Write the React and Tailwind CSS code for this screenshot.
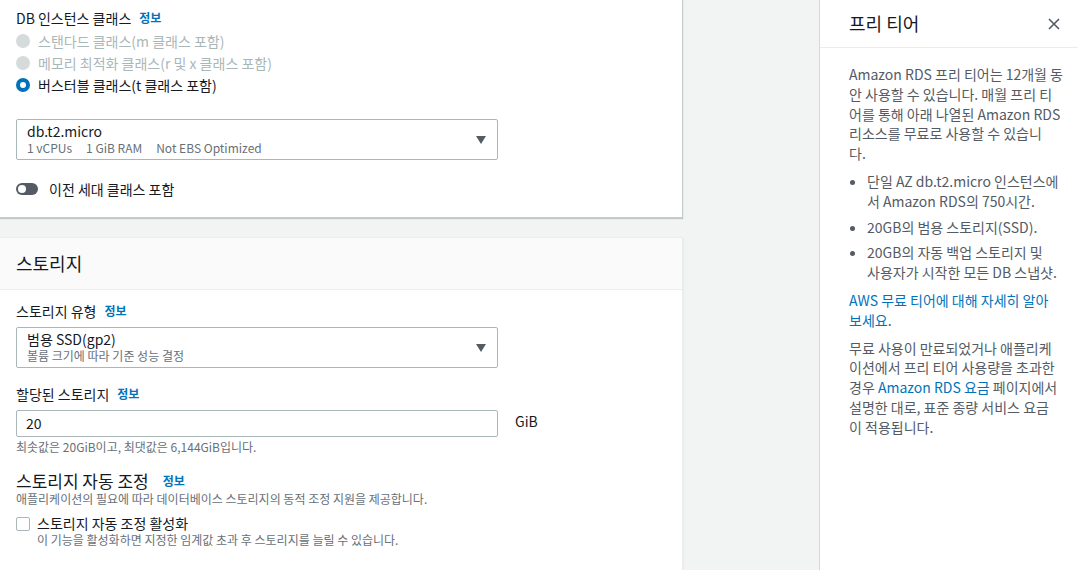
const font = { fontFamily: '"Noto Sans CJK KR", "Noto Sans", sans-serif' }

function Info({ className = 'ml-2' }) {
  return <span className={`${className} text-[12px] font-bold text-[#0073bb]`}>정보</span>
}

function Radio({ label, checked, disabled }) {
  return (
    <div className="flex h-[22px] items-center">
      {checked ? (
        <span className="h-[14px] w-[14px] rounded-full border-[4px] border-[#0073bb] bg-white" />
      ) : (
        <span className="h-[14px] w-[14px] rounded-full bg-[#d5dbdb]" />
      )}
      <span className={`ml-[8px] text-[14px] ${disabled ? 'text-[#aab7b8]' : 'text-[#16191f]'}`}>{label}</span>
    </div>
  )
}

function Caret() {
  return (
    <svg width="10" height="8" viewBox="0 0 10 8" className="mr-[11px]">
      <path d="M0 0 H10 L5 8 Z" fill="#545b64" />
    </svg>
  )
}

function Select({ title, sub, children }) {
  return (
    <div className="flex h-[41px] w-[482px] items-center justify-between rounded-[2px] border border-[#aab7b8] bg-white pl-[10px]">
      <div className="flex flex-col">
        <span className="text-[14px] leading-[17px] text-[#16191f]">{title}</span>
        <span className="text-[12px] leading-[16px] text-[#687078]">{sub || children}</span>
      </div>
      <Caret />
    </div>
  )
}

function Lines({ lines }) {
  return lines.map((l, i) => (
    <span key={i} className="block whitespace-nowrap">
      {l}
    </span>
  ))
}

export default function App() {
  return (
    <div style={font} className="flex h-[570px] w-[1078px] overflow-hidden bg-[#f2f3f3] text-[#16191f]">
      <div className="flex w-[683px] shrink-0 flex-col">
        {/* 인스턴스 클래스 */}
        <div className="h-[218px] shrink-0 border-r border-b border-[#aab7b8]/70 bg-white px-4 pt-[8px] shadow-[0_1px_1px_rgba(0,28,36,0.2)]">
          <div className="flex h-[20px] items-center text-[14px]">
            DB 인스턴스 클래스 <Info />
          </div>
          <div className="mt-[2px]">
            <Radio label="스탠다드 클래스(m 클래스 포함)" disabled />
            <Radio label="메모리 최적화 클래스(r 및 x 클래스 포함)" disabled />
            <Radio label="버스터블 클래스(t 클래스 포함)" checked />
          </div>
          <div className="mt-[23px]">
            <Select title="db.t2.micro">
              <span className="flex gap-[14px]">
                <span>1 vCPUs</span>
                <span>1 GiB RAM</span>
                <span>Not EBS Optimized</span>
              </span>
            </Select>
          </div>
          <div className="mt-[19px] flex h-[20px] items-center">
            <span className="flex h-[12px] w-[22px] items-center rounded-full bg-[#545b64] px-[2px]">
              <span className="h-[8px] w-[8px] rounded-full bg-white" />
            </span>
            <span className="ml-[11px] text-[14px]">이전 세대 클래스 포함</span>
          </div>
        </div>

        {/* 스토리지 */}
        <div className="mt-[19px] flex-1 border-t border-r border-[#eaeded] bg-white shadow-[0_1px_1px_rgba(0,28,36,0.2)]">
          <div className="flex h-[52px] items-center border-b border-[#eaeded] bg-[#fafafa] px-4 text-[18px]">
            스토리지
          </div>
          <div className="px-4">
            <div className="mt-[11px] flex h-[20px] items-center text-[14px]">
              스토리지 유형 <Info />
            </div>
            <div className="mt-[6px]">
              <Select title="범용 SSD(gp2)" sub="볼륨 크기에 따라 기준 성능 결정" />
            </div>
            <div className="mt-[16px] flex h-[20px] items-center text-[14px]">
              할당된 스토리지 <Info />
            </div>
            <div className="mt-[6px] flex items-start">
              <div className="flex h-[27px] w-[482px] items-center rounded-[2px] border border-[#aab7b8] px-[9px] text-[14px]">
                20
              </div>
              <span className="ml-[17px] mt-[1px] text-[14px]">GiB</span>
            </div>
            <div className="mt-[2px] h-[16px] text-[12px] leading-[16px] text-[#687078]">
              최솟값은 20GiB이고, 최댓값은 6,144GiB입니다.
            </div>
            <div className="mt-[16px] flex h-[20px] items-center text-[17px] leading-[20px]">
              스토리지 자동 조정 <Info className="ml-[14px]" />
            </div>
            <div className="h-[16px] text-[12px] leading-[16px] text-[#687078]">
              애플리케이션의 필요에 따라 데이터베이스 스토리지의 동적 조정 지원을 제공합니다.
            </div>
            <div className="mt-[8px] flex items-start">
              <span className="mt-[2px] h-[14px] w-[14px] rounded-[2px] border border-[#aab7b8] bg-white" />
              <div className="ml-[7px] flex flex-col">
                <span className="text-[14px] leading-[17px]">스토리지 자동 조정 활성화</span>
                <span className="text-[12px] leading-[16px] text-[#687078]">
                  이 기능을 활성화하면 지정한 임계값 초과 후 스토리지를 늘릴 수 있습니다.
                </span>
              </div>
            </div>
          </div>
        </div>
      </div>

      <div className="flex-1" />

      {/* 도움말 패널 */}
      <div className="w-[259px] shrink-0 border-l border-[#d5dbdb] bg-white">
        <div className="flex h-[48px] items-center justify-between border-b border-[#eaeded] pl-[29px] pr-[18px]">
          <span className="text-[18px]">프리 티어</span>
          <svg width="12" height="12" viewBox="0 0 12 12">
            <path d="M1 1 L11 11 M11 1 L1 11" stroke="#545b64" strokeWidth="1.6" />
          </svg>
        </div>
        <div className="pl-[29px] pt-[17px] text-[14px] leading-[19.8px] text-[#545b64]">
          <p>
            <Lines
              lines={[
                'Amazon RDS 프리 티어는 12개월 동',
                '안 사용할 수 있습니다. 매월 프리 티',
                '어를 통해 아래 나열된 Amazon RDS',
                '리소스를 무료로 사용할 수 있습니',
                '다.',
              ]}
            />
          </p>
          <ul className="mt-[8px] flex list-disc flex-col gap-[6px] pl-[18px]">
            <li>
              <Lines lines={['단일 AZ db.t2.micro 인스턴스에', '서 Amazon RDS의 750시간.']} />
            </li>
            <li>20GB의 범용 스토리지(SSD).</li>
            <li>
              <Lines lines={['20GB의 자동 백업 스토리지 및', '사용자가 시작한 모든 DB 스냅샷.']} />
            </li>
          </ul>
          <p className="mt-[8px] text-[#0073bb]">
            <Lines lines={['AWS 무료 티어에 대해 자세히 알아', '보세요.']} />
          </p>
          <p className="mt-[8px]">
            <span className="block whitespace-nowrap">무료 사용이 만료되었거나 애플리케</span>
            <span className="block whitespace-nowrap">이션에서 프리 티어 사용량을 초과한</span>
            <span className="block whitespace-nowrap">
              경우 <span className="text-[#0073bb]">Amazon RDS 요금</span> 페이지에서
            </span>
            <span className="block whitespace-nowrap">설명한 대로, 표준 종량 서비스 요금</span>
            <span className="block whitespace-nowrap">이 적용됩니다.</span>
          </p>
        </div>
      </div>
    </div>
  )
}
